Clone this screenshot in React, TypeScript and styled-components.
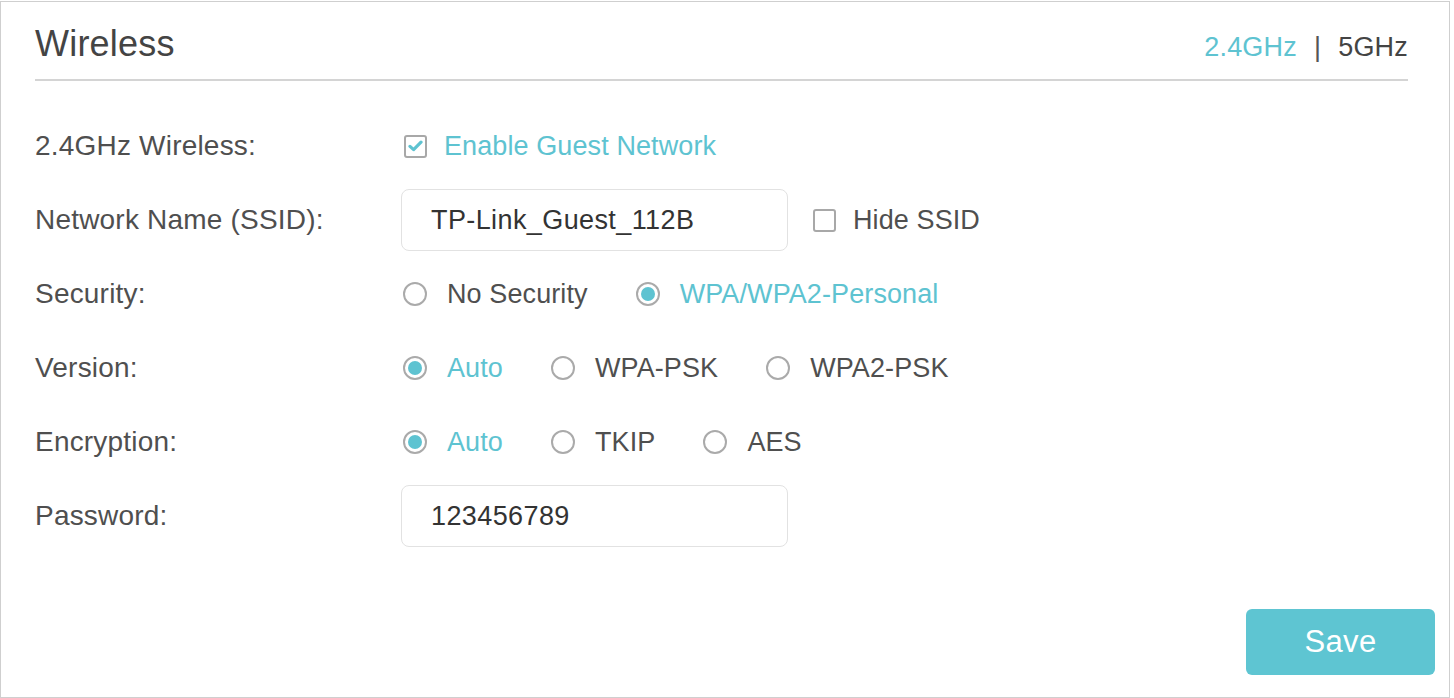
import React from "react";
import styled, { createGlobalStyle } from "styled-components";

const GlobalStyle = createGlobalStyle`
  html, body { margin: 0; padding: 0; background: #ffffff; }
  body { font-family: "Liberation Sans", Arial, sans-serif; }
  * { box-sizing: border-box; }
`;

const TEAL = "#5ec3d1";
const TEXT = "#4f4f4f";

const Panel = styled.div`
  width: 1450px;
  height: 697px;
  margin: 1px 0 0 0;
  border: 1px solid #cfcfcf;
  display: flex;
  flex-direction: column;
  padding: 17px 14px 22px 34px;
  background: #fff;
`;

const Header = styled.div`
  display: flex;
  align-items: baseline;
  justify-content: space-between;
  margin-right: 27px;
  padding-bottom: 7px;
  border-bottom: 2px solid #d4d4d4;
  line-height: 50px;
`;

const Title = styled.h1`
  margin: 0;
  font-size: 36px;
  font-weight: 400;
  color: #444;
  line-height: 50px;
  letter-spacing: 0.2px;
`;

const BandSwitch = styled.div`
  display: flex;
  align-items: baseline;
  gap: 17px;
  font-size: 27px;
  letter-spacing: 0.2px;
`;

const Band = styled.span<{ $active?: boolean }>`
  color: ${(p) => (p.$active ? TEAL : "#444")};
`;

const Sep = styled.span`
  color: #555;
`;

const Form = styled.div`
  display: flex;
  flex-direction: column;
  gap: 12px;
  margin-top: 34px;
`;

const Row = styled.div`
  display: flex;
  align-items: center;
  height: 62px;
`;

const Label = styled.div`
  width: 366px;
  flex: none;
  font-size: 28px;
  color: ${TEXT};
  letter-spacing: 0.2px;
`;

const Controls = styled.div<{ $offset?: number }>`
  display: flex;
  align-items: center;
  margin-left: ${(p) => p.$offset ?? 0}px;
`;

const TextInput = styled.div`
  width: 387px;
  height: 62px;
  border: 1px solid #e2e2e2;
  border-radius: 8px;
  padding-left: 29px;
  display: flex;
  align-items: center;
  font-size: 27px;
  color: #333;
  letter-spacing: 0.4px;
`;

const Option = styled.label<{ $gapAfter?: number; $offset?: number }>`
  display: flex;
  align-items: center;
  margin-left: ${(p) => p.$offset ?? 0}px;
  margin-right: ${(p) => p.$gapAfter ?? 48}px;
  cursor: pointer;
`;

const OptionText = styled.span<{ $active?: boolean }>`
  font-size: 27px;
  letter-spacing: 0.1px;
  color: ${(p) => (p.$active ? TEAL : TEXT)};
`;

const Box = styled.span`
  width: 23px;
  height: 23px;
  border: 2px solid #a8a8a8;
  border-radius: 3px;
  display: inline-flex;
  align-items: center;
  justify-content: center;
  margin-right: 17px;
  flex: none;
`;

const RadioRing = styled.span`
  width: 24px;
  height: 24px;
  border-radius: 50%;
  border: 2px solid #aaaaaa;
  display: inline-flex;
  align-items: center;
  justify-content: center;
  margin-right: 20px;
  flex: none;
`;

const RadioDot = styled.span`
  width: 14px;
  height: 14px;
  border-radius: 50%;
  background: ${TEAL};
`;

const Footer = styled.div`
  margin-top: auto;
  display: flex;
  justify-content: flex-end;
`;

const SaveButton = styled.button`
  width: 189px;
  height: 66px;
  border: none;
  border-radius: 6px;
  background: #5ec5d2;
  color: #fff;
  font-family: "Liberation Sans", Arial, sans-serif;
  font-size: 31px;
  letter-spacing: 0.3px;
  cursor: pointer;
`;

const Check = () => (
  <svg width="15" height="12" viewBox="0 0 15 12">
    <path d="M2 6.4 L5.6 9.6 L13 2.2" fill="none" stroke={TEAL} strokeWidth="3.2" strokeLinecap="round" strokeLinejoin="round" />
  </svg>
);

const Checkbox = ({ checked, text, active, offset }: { checked?: boolean; text: string; active?: boolean; offset?: number }) => (
  <Option $offset={offset} $gapAfter={0}>
    <Box>{checked && <Check />}</Box>
    <OptionText $active={active}>{text}</OptionText>
  </Option>
);

const Radio = ({ checked, text }: { checked?: boolean; text: string }) => (
  <Option>
    <RadioRing>{checked && <RadioDot />}</RadioRing>
    <OptionText $active={checked}>{text}</OptionText>
  </Option>
);

const RadioGroup = ({ options, value }: { options: string[]; value: string }) => (
  <Controls $offset={2}>
    {options.map((o) => (
      <Radio key={o} text={o} checked={o === value} />
    ))}
  </Controls>
);

export default function App() {
  return (
    <>
      <GlobalStyle />
      <Panel>
        <Header>
          <Title>Wireless</Title>
          <BandSwitch>
            <Band $active>2.4GHz</Band>
            <Sep>|</Sep>
            <Band>5GHz</Band>
          </BandSwitch>
        </Header>
        <Form>
          <Row>
            <Label>2.4GHz Wireless:</Label>
            <Controls>
              <Checkbox checked text="Enable Guest Network" active offset={3} />
            </Controls>
          </Row>
          <Row>
            <Label>Network Name (SSID):</Label>
            <Controls>
              <TextInput>TP-Link_Guest_112B</TextInput>
              <Checkbox text="Hide SSID" offset={25} />
            </Controls>
          </Row>
          <Row>
            <Label>Security:</Label>
            <RadioGroup options={["No Security", "WPA/WPA2-Personal"]} value="WPA/WPA2-Personal" />
          </Row>
          <Row>
            <Label>Version:</Label>
            <RadioGroup options={["Auto", "WPA-PSK", "WPA2-PSK"]} value="Auto" />
          </Row>
          <Row>
            <Label>Encryption:</Label>
            <RadioGroup options={["Auto", "TKIP", "AES"]} value="Auto" />
          </Row>
          <Row>
            <Label>Password:</Label>
            <Controls>
              <TextInput>123456789</TextInput>
            </Controls>
          </Row>
        </Form>
        <Footer>
          <SaveButton>Save</SaveButton>
        </Footer>
      </Panel>
    </>
  );
}
